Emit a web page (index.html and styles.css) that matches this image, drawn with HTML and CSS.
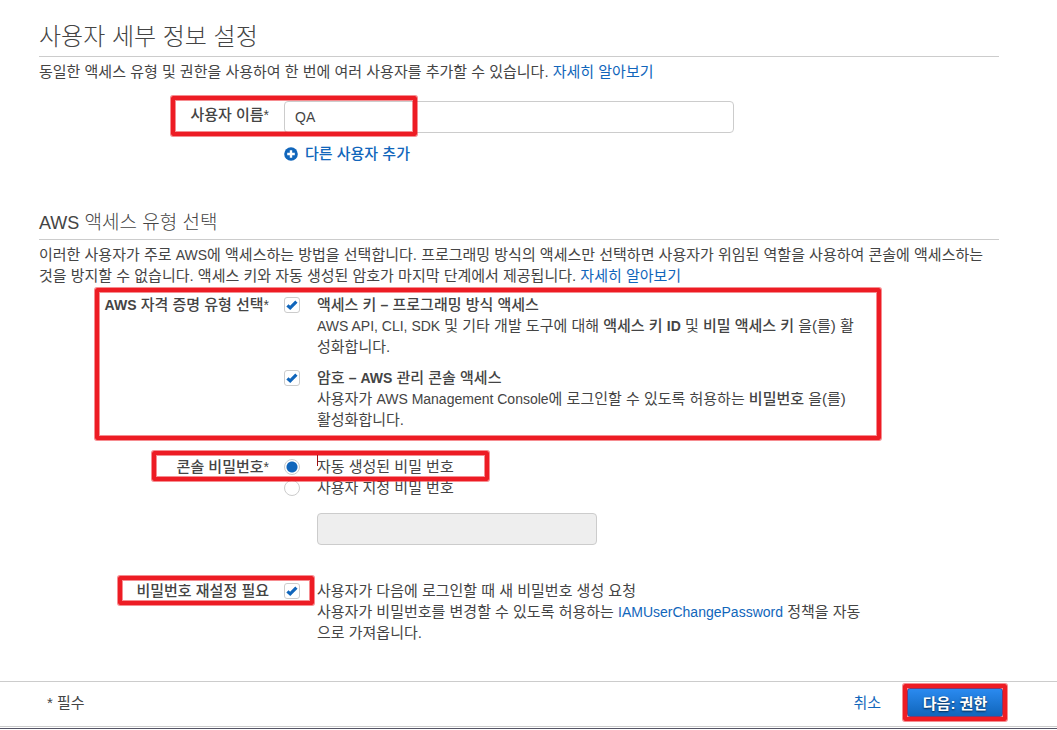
FILE: index.html
```html
<!DOCTYPE html>
<html lang="ko">
<head>
    <meta charset="UTF-8">
    <meta name="viewport" content="width=device-width, initial-scale=1.0">
    <title>사용자 추가</title>
    <link rel="stylesheet" href="styles.css">
</head>
<body>

    <form class="wizard">
        <main class="content">

            <!-- User details -->
            <section class="details">
                <h1>사용자 세부 정보 설정</h1>
                <p>동일한 액세스 유형 및 권한을 사용하여 한 번에 여러 사용자를 추가할 수 있습니다. <a href="#">자세히 알아보기</a></p>

                <div class="row name-row">
                    <label class="row-label" for="userName">사용자 이름<span class="star">*</span></label>
                    <div class="row-body">
                        <input type="text" class="text-input" id="userName" value="QA">
                        <a href="#" class="add-user">
                            <svg width="14" height="14" viewBox="0 0 14 14" aria-hidden="true">
                                <circle cx="7" cy="7" r="6.8" fill="#1166bb"/>
                                <path d="M7 3.2v7.6M3.2 7h7.6" stroke="#fff" stroke-width="2.4"/>
                            </svg>
                            다른 사용자 추가
                        </a>
                    </div>
                    <span class="highlight"></span>
                </div>
            </section>

            <!-- Access type -->
            <section class="access">
                <h2><span class="latin">AWS</span> 액세스 유형 선택</h2>
                <p>이러한 사용자가 주로 <span class="latin">AWS</span>에 액세스하는 방법을 선택합니다. 프로그래밍 방식의 액세스만 선택하면 사용자가 위임된 역할을 사용하여 콘솔에 액세스하는 것을 방지할 수 없습니다. 액세스 키와 자동 생성된 암호가 마지막 단계에서 제공됩니다. <a href="#">자세히 알아보기</a></p>

                <div class="row type-row">
                    <span class="row-label"><span class="latin">AWS</span> 자격 증명 유형 선택<span class="star">*</span></span>
                    <div class="row-body options">
                        <div class="option">
                            <input type="checkbox" id="accessKey" checked>
                            <div class="option-text">
                                <label for="accessKey"><b>액세스 키 <span class="latin">–</span> 프로그래밍 방식 액세스</b></label>
                                <div><span class="latin">AWS API, CLI, SDK</span> 및 기타 개발 도구에 대해 <b>액세스 키 <span class="latin">ID</span></b> 및 <b>비밀 액세스 키</b> 을(를) 활성화합니다.</div>
                            </div>
                        </div>
                        <div class="option">
                            <input type="checkbox" id="consolePassword" checked>
                            <div class="option-text">
                                <label for="consolePassword"><b>암호 <span class="latin">– AWS</span> 관리 콘솔 액세스</b></label>
                                <div>사용자가 <span class="latin">AWS Management Console</span>에 로그인할 수 있도록 허용하는 <b>비밀번호</b> 을(를) 활성화합니다.</div>
                            </div>
                        </div>
                    </div>
                    <span class="highlight"></span>
                </div>

                <div class="row password-row">
                    <span class="row-label">콘솔 비밀번호<span class="star">*</span></span>
                    <div class="row-body">
                        <div class="option">
                            <input type="radio" name="password" id="autoPassword" checked>
                            <label class="option-text" for="autoPassword">자동 생성된 비밀 번호</label>
                        </div>
                        <div class="option">
                            <input type="radio" name="password" id="customPassword">
                            <label class="option-text" for="customPassword">사용자 지정 비밀 번호</label>
                        </div>
                        <input type="text" class="text-input custom-password" aria-label="사용자 지정 비밀 번호" disabled>
                    </div>
                    <span class="highlight"></span>
                    <span class="caret"></span>
                </div>

                <div class="row reset-row">
                    <span class="row-label">비밀번호 재설정 필요</span>
                    <div class="row-body option">
                        <input type="checkbox" id="resetPassword" checked>
                        <div class="option-text">
                            <label for="resetPassword">사용자가 다음에 로그인할 때 새 비밀번호 생성 요청</label>
                            <div>사용자가 비밀번호를 변경할 수 있도록 허용하는 <a href="#" class="latin">IAMUserChangePassword</a> 정책을 자동으로 가져옵니다.</div>
                        </div>
                    </div>
                    <span class="highlight"></span>
                </div>
            </section>
        </main>

        <!-- Footer -->
        <footer class="footer">
            <span class="required">* 필수</span>
            <a href="#" class="cancel">취소</a>
            <div class="next">
                <button type="submit" class="next-btn">다음: 권한</button>
                <span class="highlight"></span>
            </div>
        </footer>
    </form>

</body>
</html>
```

FILE: styles.css
```css
* {
    box-sizing: border-box;
}

body {
    margin: 0;
    background-color: #fff;
    color: #444;
    font-family: "Liberation Sans", "Noto Sans CJK KR", sans-serif;
    font-size: 15px;
    line-height: 21px;
}

a {
    color: #1166bb;
    text-decoration: none;
}

p {
    margin: 0;
}

b {
    font-weight: 500;
}

.latin {
    font-size: 14px;
    line-height: 16px;
}

b .latin, .row-label .latin {
    font-weight: bold;
}

.star {
    font-size: 14px;
    font-weight: normal;
    line-height: 16px;
}

/* Headings */
h1, h2 {
    margin: 0 0 4px;
    border-bottom: 1px solid #ccc;
    font-weight: 300;
}

h1 {
    padding-bottom: 3px;
    font-size: 24px;
    line-height: 32px;
}

h2 {
    padding-bottom: 2px;
    font-size: 19px;
    line-height: 28px;
}

h2 .latin {
    font-size: 18px;
}

/* Page */
.wizard {
    padding-bottom: 1px;
    border-bottom: 1px solid #556;
}

.content {
    padding: 21px 58px 38px 39px;
}

.access {
    margin-top: 43px;
}

/* Form rows */
.row {
    position: relative;
    display: grid;
    grid-template-columns: 230px minmax(0, 1fr);
    column-gap: 15px;
}

.row-label {
    text-align: right;
    font-weight: 500;
}

.name-row {
    margin-top: 19px;
}

.name-row .row-label {
    padding-top: 3px;
}

.type-row {
    margin-top: 8px;
}

.password-row {
    margin-top: 26px;
}

.reset-row {
    margin-top: 35px;
}

/* Inputs */
.text-input {
    display: block;
    width: 100%;
    max-width: 450px;
    height: 32px;
    padding: 0 10px;
    border: 1px solid #ccc;
    border-radius: 4px;
    background-color: #fff;
    color: #444;
    font-family: inherit;
    font-size: 14px;
}

.text-input:disabled {
    background-color: #eee;
}

.custom-password {
    max-width: 280px;
    margin: 15px 0 0 33px;
}

.add-user {
    display: inline-flex;
    align-items: center;
    gap: 7px;
    margin-top: 10px;
    font-weight: 500;
}

/* Options */
.options {
    display: grid;
    gap: 10px;
}

.option {
    display: flex;
    align-items: flex-start;
    gap: 17px;
}

.option-text {
    flex: 0 1 545px;
}

.option input {
    appearance: none;
    flex: none;
    width: 16px;
    height: 16px;
    margin: 3px 0 0;
    border: 1px solid #ccc;
    border-radius: 3px;
    background: #fff center / 14px 14px no-repeat;
}

.option input[type="checkbox"]:checked {
    background-image: url("data:image/svg+xml,%3Csvg xmlns='http://www.w3.org/2000/svg' viewBox='0 0 14 14'%3E%3Cpath d='M2.4 7.4l2.8 2.5 6.2-6.2' fill='none' stroke='%231166bb' stroke-width='3.2'/%3E%3C/svg%3E");
}

.option input[type="radio"] {
    border-radius: 50%;
}

.option input[type="radio"]:checked {
    background-image: radial-gradient(circle, #1166bb 5px, transparent 6px);
}

/* Red highlight boxes */
.highlight {
    position: absolute;
    border: 4px solid #ed1c24;
    border-radius: 2px;
    box-shadow: 0 0 0 1px rgba(237, 28, 36, 0.5), inset 0 0 0 1px rgba(237, 28, 36, 0.5);
    pointer-events: none;
}

.name-row .highlight {
    top: -5px;
    left: 132px;
    width: 246px;
    height: 40px;
}

.type-row .highlight {
    top: -6px;
    bottom: -10px;
    left: 56px;
    width: 786px;
}

.password-row .highlight {
    top: -5px;
    left: 113px;
    width: 337px;
    height: 30px;
}

.reset-row .highlight {
    top: -4px;
    left: 79px;
    width: 196px;
    height: 29px;
}

.next .highlight {
    inset: -4px;
}

.caret {
    position: absolute;
    top: -1px;
    left: 278px;
    width: 1px;
    height: 11px;
    background-color: #a01010;
}

/* Footer */
.footer {
    display: flex;
    align-items: center;
    height: 46px;
    padding: 0 54px 2px 47px;
    border-top: 1px solid #ccc;
    border-bottom: 1px solid #ccc;
}

.cancel {
    margin-left: auto;
}

.next {
    position: relative;
    margin-left: 26px;
}

.next-btn {
    display: block;
    width: 96px;
    height: 29px;
    padding: 0;
    border: 1px solid #15b;
    border-radius: 3px;
    background: linear-gradient(#2a8af0, #1166bb);
    color: #fff;
    font-family: inherit;
    font-size: 15px;
    font-weight: bold;
    text-shadow: 0 1px 2px #024;
}
```
